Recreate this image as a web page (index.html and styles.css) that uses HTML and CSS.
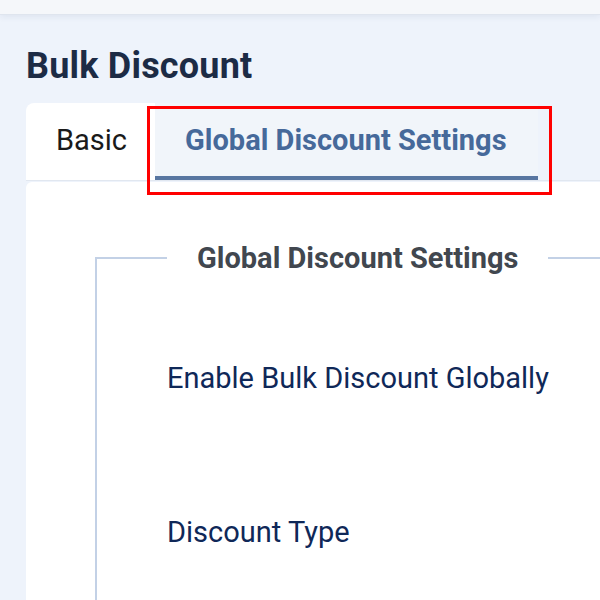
FILE: index.html
```html
<!DOCTYPE html>
<html lang="en">
  <head>
    <meta charset="UTF-8" />
    <meta name="viewport" content="width=device-width, initial-scale=1.0" />
    <title>Bulk Discount</title>
    <link rel="stylesheet" href="styles.css">
  </head>

  <body>
    <div class="topbar"></div>

    <div class="page">
      <h1 class="page-title">Bulk Discount</h1>

      <div class="card">
        <ul class="tabs">
          <li class="tab">Basic</li>
          <li class="tab active">
            Global Discount Settings
            <span class="highlight"></span>
          </li>
        </ul>

        <div class="panel">
          <fieldset class="settings">
            <legend>Global Discount Settings</legend>

            <div class="field">
              <label>Enable Bulk Discount Globally</label>
            </div>

            <div class="field">
              <label>Discount Type</label>
            </div>
          </fieldset>
        </div>
      </div>
    </div>
  </body>
</html>
```

FILE: styles.css
```css
body {
  font-family: Roboto, "Liberation Sans", sans-serif;
  margin: 0;
  padding: 0;
  background-color: #eef3fb;
  height: 600px;
  overflow: hidden;
}

.topbar {
  height: 14px;
  background-color: #f5f7fa;
  border-bottom: 1px solid #dfe5ee;
  box-shadow: 0 2px 6px rgba(40, 60, 100, 0.08);
}

.page {
  padding-left: 26px;
}

.page-title {
  margin: 0;
  padding-top: 30px;
  height: 58px;
  font-size: 36px;
  line-height: 42px;
  font-weight: 700;
  letter-spacing: 0.2px;
  color: #1c2b45;
}

.card {
  display: flex;
  flex-direction: column;
}

.tabs {
  list-style: none;
  margin: 0;
  padding: 0;
  display: flex;
  border-bottom: 1px solid #e1e7f0;
}

.tab {
  position: relative;
  height: 73px;
  padding: 0 28px 0 30px;
  display: flex;
  align-items: center;
  font-size: 29px;
  color: #1a1a1a;
  background-color: #fff;
  border-top-left-radius: 8px;
  border-bottom: 4px solid transparent;
}

.tab.active {
  border-top-left-radius: 0;
  padding: 0 31px 0 30px;
  background-color: #f1f5fa;
  color: #46699a;
  font-weight: 700;
  border-bottom-color: #5876a1;
}

/* annotation box drawn over the active tab */
.highlight {
  position: absolute;
  left: -8px;
  right: -14px;
  top: 3px;
  bottom: -19px;
  border: 3px solid #f00;
}

.panel {
  background-color: #fff;
  margin-top: 1px;
  border-top-left-radius: 6px;
  padding: 59px 0 0 69px;
  height: 420px;
}

.settings {
  margin: 0;
  padding: 26px 0 0 70px;
  border: 2px solid #c3d1e6;
  border-right: none;
  border-bottom: none;
}

.settings legend {
  padding: 0 30px;
  font-size: 29px;
  line-height: 34px;
  font-weight: 700;
  color: #41474f;
}

.field {
  height: 154px;
  display: flex;
  align-items: center;
}

.field label {
  font-size: 29px;
  color: #0f2858;
}
```
